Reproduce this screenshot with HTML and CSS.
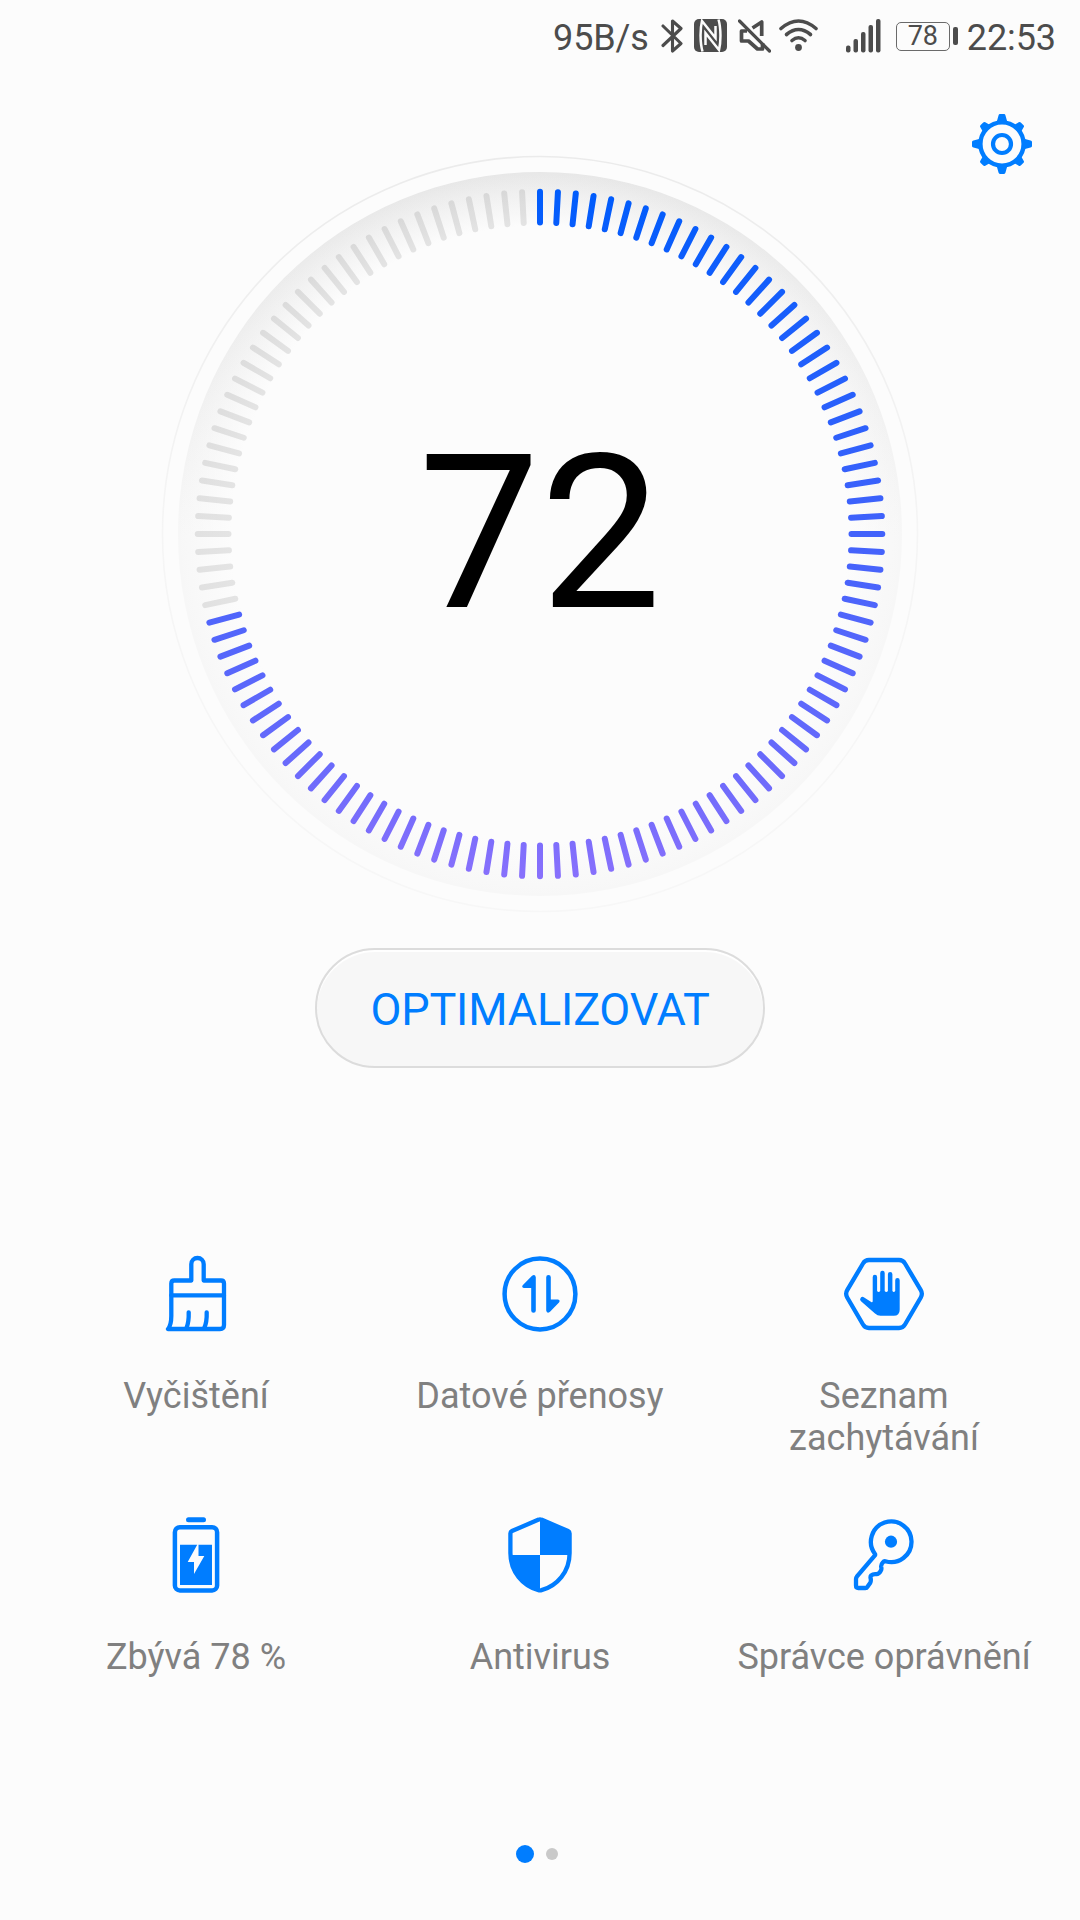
FILE: index.html
```html
<!DOCTYPE html>
<html lang="cs">
<head>
<meta charset="utf-8">
<title>Správce telefonu</title>
<link rel="stylesheet" href="styles.css">
</head>
<body>
<div class="screen">
  <header class="status">
    <span class="status-text speed">95B/s</span>
    <svg class="bluetooth" width="22" height="36" viewBox="0 0 22 36"><path d="M2 8 L20 25.500 L11.500 33 V3 L20 10.500 L2 27.500" fill="none" stroke="currentColor" stroke-width="3.100" stroke-linecap="round" stroke-linejoin="round"/></svg>
    <svg class="nfc" width="34" height="34" viewBox="0 0 34 34"><rect x="0" y="0" width="33" height="33" rx="5" fill="currentColor"/><path d="M8.500 32.500 C6 24 6 10 8 2 L21.500 19 V7 M24.500 .5 C27 9 27 23 25 31 L11.500 14 V26" fill="none" stroke="#fcfcfc" stroke-width="2.500"/></svg>
    <svg class="mute" width="33" height="34" viewBox="0 0 33 34"><path d="M9 12 H3.500 V22 H10.500 L19.500 30 H24.500 V24 M14.500 9 L23.700 3 V17" fill="none" stroke="currentColor" stroke-width="3.700" stroke-linejoin="round"/><path d="M1.500 2 L31.500 32" stroke="currentColor" stroke-width="3.200" stroke-linecap="round"/></svg>
    <svg class="wifi" width="39" height="34" viewBox="0 0 39 34"><g fill="none" stroke="currentColor" stroke-width="3.600" stroke-linecap="round"><path d="M2 9.500 Q19.500 -5.500 37 9.500"/><path d="M7.500 15.500 Q19.500 5.500 31.500 15.500"/><path d="M13 21.500 Q19.500 16 26 21.500"/></g><circle cx="19.500" cy="28.500" r="3.400" fill="currentColor"/></svg>
    <svg class="signal" width="35" height="34" viewBox="0 0 35 34"><g fill="currentColor"><rect x="0" y="26.500" width="4.500" height="7" rx="2"/><rect x="7.500" y="20" width="4.500" height="13.500" rx="2"/><rect x="15" y="13" width="4.500" height="20.500" rx="2"/><rect x="22.500" y="6" width="4.500" height="27.500" rx="2"/><rect x="30" y="0" width="4.500" height="33.500" rx="2"/></g></svg>
    <span class="charge"><span class="charge-level">78</span><span class="charge-tip"></span></span>
    <span class="status-text">22:53</span>
  </header>

  <div class="toolbar">
    <svg width="60" height="60" viewBox="-30 -30 60 60">
      <defs><path id="tooth" d="M-5.300 -22 L-3.500 -28.600 Q-3.200 -30 -2 -30 H2 Q3.200 -30 3.500 -28.600 L5.300 -22Z"/></defs>
      <g fill="currentColor"><use href="#tooth"/><use href="#tooth" transform="rotate(45) translate(0 1.500)"/><use href="#tooth" transform="rotate(90)"/><use href="#tooth" transform="rotate(135) translate(0 1.500)"/><use href="#tooth" transform="rotate(180)"/><use href="#tooth" transform="rotate(225) translate(0 1.500)"/><use href="#tooth" transform="rotate(270)"/><use href="#tooth" transform="rotate(315) translate(0 1.500)"/></g>
      <g fill="none" stroke="currentColor"><circle r="21.600" stroke-width="4.400"/><circle r="9" stroke-width="4.200"/></g>
    </svg>
  </div>

  <section class="gauge">
    <svg class="dial" width="760" height="760" viewBox="-380 -380 760 760">
      <defs>
        <linearGradient id="shade" x1="0" y1="0" x2="0" y2="1"><stop offset="0" stop-color="#e7e7e7"/><stop offset=".5" stop-color="#f7f7f7"/><stop offset="1" stop-color="#f7f7f7"/></linearGradient>
        <linearGradient id="rim" x1="0" y1="0" x2="0" y2="1"><stop offset="0" stop-color="#ebebeb"/><stop offset=".5" stop-color="#f5f5f5"/><stop offset="1" stop-color="#f7f7f7"/></linearGradient>
        <radialGradient id="face"><stop offset=".85" stop-color="#fcfcfc"/><stop offset="1" stop-color="#fcfcfc" stop-opacity="0"/></radialGradient>
        <linearGradient id="level" gradientUnits="userSpaceOnUse" x1="0" y1="-345" x2="0" y2="345"><stop offset="0" stop-color="#005cfc"/><stop offset=".5" stop-color="#4262fb"/><stop offset=".8" stop-color="#6469fb"/><stop offset="1" stop-color="#8870fc"/></linearGradient>
      </defs>
      <circle r="377.500" fill="none" stroke="url(#rim)" stroke-width="1.600"/>
      <circle r="362" fill="url(#shade)"/>
      <circle r="362.500" fill="url(#face)"/>
      <path id="ticks-rest" fill="none" stroke="#000" stroke-opacity=".095" stroke-width="6" stroke-linecap="round"/>
      <path id="ticks-level" fill="none" stroke="url(#level)" stroke-width="6" stroke-linecap="round"/>
    </svg>
    <div class="score">72</div>
  </section>

  <button class="optimize">OPTIMALIZOVAT</button>

  <main class="tools">
    <div class="tool">
      <svg width="96" height="96" viewBox="0 0 96 96"><g fill="none" stroke="currentColor" stroke-width="4.300" stroke-linejoin="round" stroke-linecap="round"><path d="M43.300 34.500 H26.300 Q23.300 34.500 23.300 37.500 V70 Q23.300 79 20 83 H72 Q76 83 76 79 V37.500 Q76 34.500 73 34.500 H55.700 V18.200 A6.200 6.200 0 0 0 43.300 18.200 Z"/><path d="M23.300 49.300 H76 M40.700 66.300 Q41 76 38.500 82 M58.700 66.300 Q59 76 56.300 82"/></g></svg>
      <span class="tool-name">Vyčištění</span>
    </div>
    <div class="tool">
      <svg width="96" height="96" viewBox="0 0 96 96"><circle cx="48" cy="48" r="35.400" fill="none" stroke="currentColor" stroke-width="4.500"/><g fill="currentColor"><path d="M43.800 31.300 V64.500 A2.300 2.300 0 0 1 39.200 64.500 V42 H31.800 Q29.300 41.300 30.700 39.200 L39.800 29.900 Q43.200 27.800 43.800 31.300Z"/><path d="M54.200 64.500 V31.300 A2.300 2.300 0 0 1 58.800 31.300 V53.600 H66 Q68.600 54.300 67 56.600 L58 65.800 Q54.800 68 54.200 64.500Z"/></g></svg>
      <span class="tool-name">Datové přenosy</span>
    </div>
    <div class="tool">
      <svg width="96" height="96" viewBox="0 0 96 96"><path d="M33 14 H63 Q67 14 69 17.500 L84.800 44.200 Q86.900 47.800 84.800 51.500 L69 78.500 Q67 82 63 82 H33 Q29 82 27 78.500 L11.200 51.500 Q9.100 47.800 11.200 44.200 L27 17.500 Q29 14 33 14Z" fill="none" stroke="currentColor" stroke-width="4.300"/><path d="M36.700 56 V31 A2.200 2.200 0 0 1 41.100 31 V45 Q42.600 47 44.200 45 V27 A2.250 2.250 0 0 1 48.700 27 V45 Q50.300 47 51.900 45 V28.300 A2.250 2.250 0 0 1 56.400 28.300 V45 Q57.800 47 59.200 45 V34.300 A2.250 2.250 0 0 1 63.700 34.300 V63.700 Q63.700 69.700 57.700 69.700 H44.500 Q41.500 69.700 39 67.500 L25 55.300 A2.500 2.500 0 0 1 27.800 51.200 L35.200 56 Q36.700 56.700 36.700 55Z" fill="currentColor"/></svg>
      <span class="tool-name">Seznam zachytávání</span>
    </div>
    <div class="tool">
      <svg width="96" height="96" viewBox="0 0 96 96"><rect x="38" y="10.200" width="20" height="5" rx="2.500" fill="currentColor"/><rect x="26.900" y="20.200" width="42.200" height="63.200" rx="5" fill="none" stroke="currentColor" stroke-width="4.500"/><path d="M32 37.800 H49.200 L39.700 55 H46 V67 L56.300 49 H50.500 V37.800 H64 V78 H32Z" fill="currentColor"/></svg>
      <span class="tool-name">Zbývá 78 %</span>
    </div>
    <div class="tool">
      <svg width="96" height="96" viewBox="0 0 96 96"><path d="M46.700 12.600 Q48 12 49.300 12.600 L76 24 Q77.600 24.800 77.600 26.500 V46 C77.600 65 65 79 49.500 83.200 Q48 83.700 46.500 83.200 C31 79 18.400 65 18.400 46 V26.500 Q18.400 24.800 20 24Z" fill="none" stroke="currentColor" stroke-width="4.300"/><path d="M48 12 L77 25 V48 H48Z M48 48 V83.500 C31 79 18.400 65 18.400 48Z" fill="currentColor"/></svg>
      <span class="tool-name">Antivirus</span>
    </div>
    <div class="tool">
      <svg width="96" height="96" viewBox="0 0 96 96"><path d="M39 47 A20.300 20.300 0 1 1 49.300 54.200 Q48 53.800 46.800 55.500 Q44.800 57.500 45.200 60 Q45.800 62 44.800 63.700 Q43 67 40.500 67.200 Q37 66.800 35.300 68.300 Q34 69.700 34.800 72 Q35 74.800 34.300 75.800 L31.300 80 Q30.800 81 29.300 81 H22.300 Q20 81 20 78.500 V72 Q20 70.500 21 69.300 L38.700 48.700 Q39.400 47.800 39 47Z" fill="none" stroke="currentColor" stroke-width="4.300" stroke-linejoin="round"/><circle cx="55" cy="34.700" r="6.100" fill="currentColor"/></svg>
      <span class="tool-name">Správce oprávnění</span>
    </div>
  </main>

  <nav class="pager"><span class="page page-current"></span><span class="page"></span></nav>
</div>
<script src="dial.js"></script>
</body>
</html>
```
FILE: styles.css
```css
* { box-sizing: border-box; }

body {
  margin: 0;
  background: #fcfcfc;
  font-family: Roboto, "Noto Sans", sans-serif;
}

svg { display: block; flex: none; }

.screen {
  width: 1080px;
  height: 1920px;
  display: flex;
  flex-direction: column;
  align-items: center;
  overflow: hidden;
}

.status {
  width: 100%;
  height: 72px;
  padding: 0 24px 0 0;
  display: flex;
  justify-content: flex-end;
  align-items: center;
  color: #4c4c4c;
}

.status-text { font-size: 36px; line-height: 42px; padding-top: 3px; letter-spacing: -.1px; }
.speed { margin-right: 12px; }
.bluetooth { margin-right: 11px; }
.nfc { margin-right: 10px; }
.mute { margin-right: 8px; }
.wifi { margin-right: 28px; }
.signal { margin-right: 15px; }

.charge { display: flex; align-items: center; gap: 3px; margin-right: 9px; }
.charge-level {
  width: 54px;
  height: 29px;
  border: 1.500px solid #6a6a6a;
  border-radius: 5px;
  font-size: 27px;
  line-height: 27px;
  text-align: center;
}
.charge-tip { width: 5px; height: 18px; border-radius: 2px; background: #4c4c4c; }

.toolbar {
  width: 100%;
  height: 82px;
  padding: 42px 48px 0 0;
  display: flex;
  justify-content: flex-end;
  color: #007dff;
}

.gauge {
  width: 760px;
  height: 760px;
  display: grid;
  place-items: center;
}
.dial, .score { grid-area: 1 / 1; }
.score { font-size: 216px; line-height: 254px; color: #000; }

.optimize {
  width: 450px;
  height: 120px;
  margin-top: 34px;
  padding: 3px 0 0;
  border: 2px solid #dcdcdc;
  border-radius: 60px;
  background: #f7f7f7;
  box-shadow: inset 0 2px 1px #fff;
  color: #007dff;
  font: 400 45px/54px Roboto, sans-serif;
  letter-spacing: -.15px;
}

.tools {
  width: 1032px;
  margin-top: 178px;
  display: grid;
  grid-template-columns: repeat(3, 1fr);
  grid-auto-rows: 261px;
}
.tool {
  display: flex;
  flex-direction: column;
  align-items: center;
  gap: 33px;
  color: #007dff;
}
.tool-name {
  max-width: 300px;
  color: #808080;
  font-size: 36px;
  line-height: 42px;
  text-align: center;
}

.pager {
  margin-top: 77px;
  margin-right: 6px;
  height: 18px;
  display: flex;
  align-items: center;
  gap: 12px;
}
.page { width: 12px; height: 12px; border-radius: 50%; background: #c9c9c9; }
.page-current { width: 18px; height: 18px; background: #007dff; }
```
FILE: dial.js
```js
// 120 ticks around the dial; the first 86 show the score of 72 %.
const TICKS = 120;
const LIT = 86;

// Radial segment of tick i, clockwise from the top.
function tick(i) {
  const a = (i / TICKS) * 2 * Math.PI;
  const x = Math.sin(a);
  const y = -Math.cos(a);
  return `M${x * 311.5} ${y * 311.5}L${x * 342.3} ${y * 342.3}`;
}

const all = Array.from({ length: TICKS }, (_, i) => tick(i));
document.getElementById('ticks-level').setAttribute('d', all.slice(0, LIT).join(''));
document.getElementById('ticks-rest').setAttribute('d', all.slice(LIT).join(''));
```
